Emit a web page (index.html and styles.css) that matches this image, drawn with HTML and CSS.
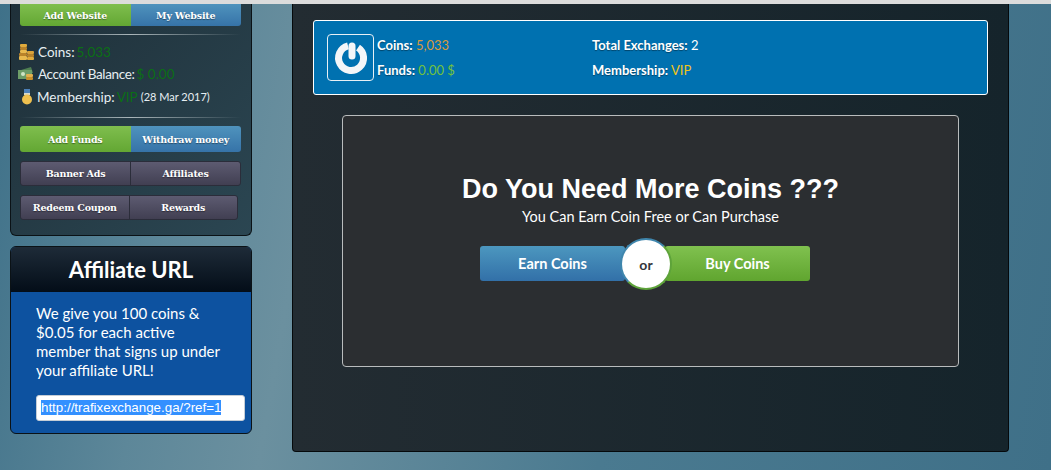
FILE: index.html
```html
<!DOCTYPE html>
<html lang="en">
<head>
    <meta charset="UTF-8">
    <meta name="viewport" content="width=device-width, initial-scale=1.0">
    <title>Trafix Exchange</title>
    <link rel="stylesheet" href="styles.css">
</head>
<body>
    <div class="topbar"></div>
    <div class="page">
        <aside class="sidebar">
            <div class="panel user-panel">
                <div class="btn-row">
                    <a class="btn green">Add Website</a>
                    <a class="btn blue">My Website</a>
                </div>
                <div class="rule"></div>
                <ul class="stats">
                    <li>
                        <svg class="stat-icon" viewBox="0 0 16 18">
                            <rect x="2" y="1" width="7" height="3" rx="1" fill="#e0ab3c"/>
                            <rect x="2" y="4" width="7" height="3" rx="1" fill="#b9832a"/>
                            <rect x="2" y="7" width="7" height="3" rx="1" fill="#e8b94e"/>
                            <rect x="1" y="10" width="8" height="3" rx="1" fill="#b9832a"/>
                            <rect x="1" y="13" width="8" height="4" rx="1" fill="#e8b94e"/>
                            <rect x="9" y="8" width="7" height="3" rx="1" fill="#d9a23a"/>
                            <rect x="9" y="11" width="7" height="3" rx="1" fill="#b9832a"/>
                            <rect x="9" y="14" width="7" height="3" rx="1" fill="#e0ab3c"/>
                        </svg>
                        <span>Coins:</span> <span class="val">5,033</span>
                    </li>
                    <li>
                        <svg class="stat-icon money" viewBox="0 0 16 14">
                            <rect x="0" y="3" width="14" height="9" fill="#6d9d68"/>
                            <path d="M3 3 L13 0 L15 6 L14 6 L14 3 Z" fill="#4f7f52"/>
                            <circle cx="5" cy="7" r="2" fill="#cfe5c6"/>
                            <rect x="8" y="7" width="7" height="3" rx="1" fill="#e3b04e"/>
                            <rect x="8" y="10" width="7" height="3" rx="1" fill="#c78f2a"/>
                        </svg>
                        <span class="tight">Account Balance:</span> <span class="val">$ 0.00</span>
                    </li>
                    <li>
                        <svg class="stat-icon medal" viewBox="0 0 12 16">
                            <rect x="3" y="0" width="6" height="6" fill="#4b7fb8"/>
                            <rect x="3" y="4" width="6" height="2" fill="#d8d8c8"/>
                            <circle cx="6" cy="10.5" r="5" fill="#eec04f"/>
                        </svg>
                        <span>Membership:</span> <span class="val">VIP</span> <small>(28 Mar 2017)</small>
                    </li>
                </ul>
                <div class="rule"></div>
                <div class="btn-row funds-row">
                    <a class="btn green">Add Funds</a>
                    <a class="btn blue">Withdraw money</a>
                </div>
                <div class="btn-row dark-row">
                    <a class="btn dark">Banner Ads</a>
                    <a class="btn dark">Affiliates</a>
                </div>
                <div class="btn-row dark-row short-row">
                    <a class="btn dark">Redeem Coupon</a>
                    <a class="btn dark">Rewards</a>
                </div>
            </div>

            <div class="panel affiliate-panel">
                <h3 class="panel-title">Affiliate URL</h3>
                <div class="affiliate-body">
                    <p>We give you 100 coins &amp; $0.05 for each active member that signs up under your affiliate URL!</p>
                    <div class="url-box"><span class="selected">http://trafixexchange.ga/?ref=1</span></div>
                </div>
            </div>
        </aside>

        <main class="main-panel">
            <div class="info-bar">
                <div class="avatar">
                    <svg viewBox="0 0 46 46" width="46" height="46">
                        <path d="M30 12.6 A12.5 12.5 0 1 1 20 10.9" fill="none" stroke="#f4f6f8" stroke-width="7"/>
                        <path d="M24 11 L24 21" stroke="#f4f6f8" stroke-width="7" stroke-linecap="round"/>
                    </svg>
                </div>
                <div class="info-col first">
                    <div><b>Coins:</b> <span class="orange">5,033</span></div>
                    <div><b>Funds:</b> <span class="lime">0.00 $</span></div>
                </div>
                <div class="info-col">
                    <div><b>Total Exchanges:</b> 2</div>
                    <div><b>Membership:</b> <span class="gold">VIP</span></div>
                </div>
            </div>

            <div class="promo">
                <h1>Do You Need More Coins ???</h1>
                <p>You Can Earn Coin Free or Can Purchase</p>
                <div class="choice">
                    <a class="choice-btn earn">Earn Coins</a>
                    <a class="choice-btn buy">Buy Coins</a>
                    <span class="or">or</span>
                </div>
            </div>
        </main>
    </div>
</body>
</html>
```

FILE: styles.css
```css
html, body {
    margin: 0;
    height: 470px;
    overflow: hidden;
}

body {
    font-family: 'Lato', 'Open Sans', sans-serif;
    background: linear-gradient(100deg, #3f7189 0%, #5d8799 18%, #6b909f 30%, #4a7a90 60%, #3f7088 100%);
    color: #fff;
}

.topbar {
    height: 4px;
    background: #dcdcdc;
}

.page {
    display: flex;
    align-items: flex-start;
    padding-left: 10px;
}

.sidebar {
    width: 242px;
    margin-right: 40px;
}

.panel {
    box-sizing: border-box;
    border: 1px solid #0b1216;
    border-radius: 6px;
}

.user-panel {
    height: 232px;
    padding: 0 10px 0 9px;
    border-top: none;
    border-radius: 0 0 6px 6px;
    background: linear-gradient(135deg, #1f3039 0%, #2b4652 100%);
}

.btn-row {
    display: flex;
    height: 22px;
}

.btn {
    flex: 1 1 0;
    display: flex;
    align-items: center;
    justify-content: center;
    font-family: 'DejaVu Serif', serif;
    font-weight: bold;
    font-size: 9.5px;
    letter-spacing: -0.2px;
    color: #fff;
    text-shadow: 0 1px 1px rgba(0,0,0,0.4);
}

.green {
    background: linear-gradient(#7fbe4e, #63a733);
    border-radius: 0 0 0 3px;
}

.blue {
    background: linear-gradient(#4f93bd, #3673a8);
    border-radius: 0 0 3px 0;
}

.rule {
    height: 1px;
    margin-top: 8px;
    background: linear-gradient(90deg, transparent, #aab6ba 50%, transparent);
}

.stats {
    list-style: none;
    margin: 5.5px 0 0;
    padding: 0;
    font-size: 13.5px;
}

.stats li {
    display: flex;
    align-items: center;
    gap: 3px;
    height: 22.5px;
    margin-left: -2px;
    white-space: pre;
    color: #e6eef2;
}

.stat-icon {
    width: 16px;
    height: 18px;
    margin-right: 1px;
}

.stat-icon.money {
    height: 14px;
}

.stat-icon.medal {
    width: 12px;
    height: 16px;
    margin: 0 1px 0 3px;
}

.tight {
    letter-spacing: -0.35px;
}

.val {
    color: #0b6f15;
    margin-left: -1px;
}

.stats small {
    font-size: 11px;
    margin-left: 0;
}

.stats + .rule {
    margin-top: 9px;
}

.funds-row {
    height: 26px;
    margin-top: 8px;
}

.funds-row .green {
    border-radius: 3px 0 0 3px;
}

.funds-row .blue {
    border-radius: 0 3px 3px 0;
}

.dark-row {
    height: 25px;
    margin-top: 9px;
    border-radius: 3px;
    border: 1px solid #2b2d3a;
    box-sizing: border-box;
    background: linear-gradient(#5d5b71, #413f52);
}

.dark-row .dark + .dark {
    border-left: 1px solid #2b2d3a;
}

.short-row {
    margin-right: 3px;
}

.affiliate-panel {
    height: 188px;
    margin-top: 10px;
    overflow: hidden;
    background: #0d52a0;
}

.panel-title {
    height: 45px;
    line-height: 46px;
    margin: 0;
    text-align: center;
    font-size: 22px;
    font-weight: bold;
    background: linear-gradient(#1e2b38, #030d18);
}

.affiliate-body {
    padding: 12px 6px 0 25px;
    font-size: 15px;
}

.affiliate-body p {
    width: 186px;
    margin: 0 0 15px;
    line-height: 19px;
}

.url-box {
    height: 26px;
    box-sizing: border-box;
    padding: 4px;
    border-radius: 3px;
    border: 1px solid #c5cdd6;
    background: #fff;
    font-family: 'Liberation Sans', sans-serif;
    font-size: 13.33px;
    line-height: 16px;
    white-space: nowrap;
}

.selected {
    background: #3390ff;
    color: #fff;
}

.main-panel {
    box-sizing: border-box;
    width: 717px;
    height: 448px;
    padding: 16px 20px 0;
    border: 1px solid #05090b;
    border-top: none;
    border-radius: 0 0 4px 4px;
    background: linear-gradient(90deg, #232c32 0%, #15242b 100%);
}

.info-bar {
    display: flex;
    align-items: center;
    box-sizing: border-box;
    height: 75px;
    padding-left: 13px;
    border: 1px solid #fff;
    border-radius: 3px;
    background: #0071b0;
    font-size: 13px;
}

.avatar {
    box-sizing: border-box;
    width: 47px;
    height: 47px;
    margin-right: 3px;
    border: 1px solid #e8f0f5;
    border-radius: 4px;
}

.avatar svg {
    display: block;
}

.info-col {
    display: flex;
    flex-direction: column;
    gap: 7px;
    line-height: 18px;
}

.info-col.first {
    width: 215px;
}

.info-col b {
    text-shadow: 0 1px 1px rgba(0,0,0,0.4);
}

.orange { color: #d99a3c; }
.lime { color: #72c23c; }
.gold { color: #f0c419; }

.promo {
    box-sizing: border-box;
    width: 617px;
    height: 252px;
    margin: 20px 0 0 29px;
    padding-top: 57px;
    border: 1px solid #b9bcbd;
    border-radius: 4px;
    background: #2b2e31;
    text-align: center;
}

.promo h1 {
    margin: 0;
    font-family: 'Liberation Sans', Arial, sans-serif;
    font-size: 27px;
    line-height: 32px;
    font-weight: bold;
}

.promo p {
    margin: 2px 0 0;
    font-size: 14.5px;
    line-height: 20px;
}

.choice {
    position: relative;
    display: flex;
    gap: 40px;
    margin: 19px 0 0 137px;
}

.choice-btn {
    width: 145px;
    height: 35px;
    line-height: 36px;
    font-size: 14.5px;
    font-weight: bold;
    border-radius: 3px;
}

.earn {
    background: linear-gradient(#4c97bf, #3270a8);
}

.buy {
    background: linear-gradient(#80c14f, #60a52f);
}

/* sits over the gap between the two buttons */
.or {
    position: absolute;
    left: 140px;
    top: -8px;
    box-sizing: border-box;
    width: 52px;
    height: 52px;
    line-height: 50px;
    border-radius: 50%;
    border: 2px solid;
    border-color: #3f86ad #5ea33a #5ea33a #3f86ad;
    background: #fff;
    color: #33363a;
    font-size: 14px;
    font-weight: bold;
}
```
